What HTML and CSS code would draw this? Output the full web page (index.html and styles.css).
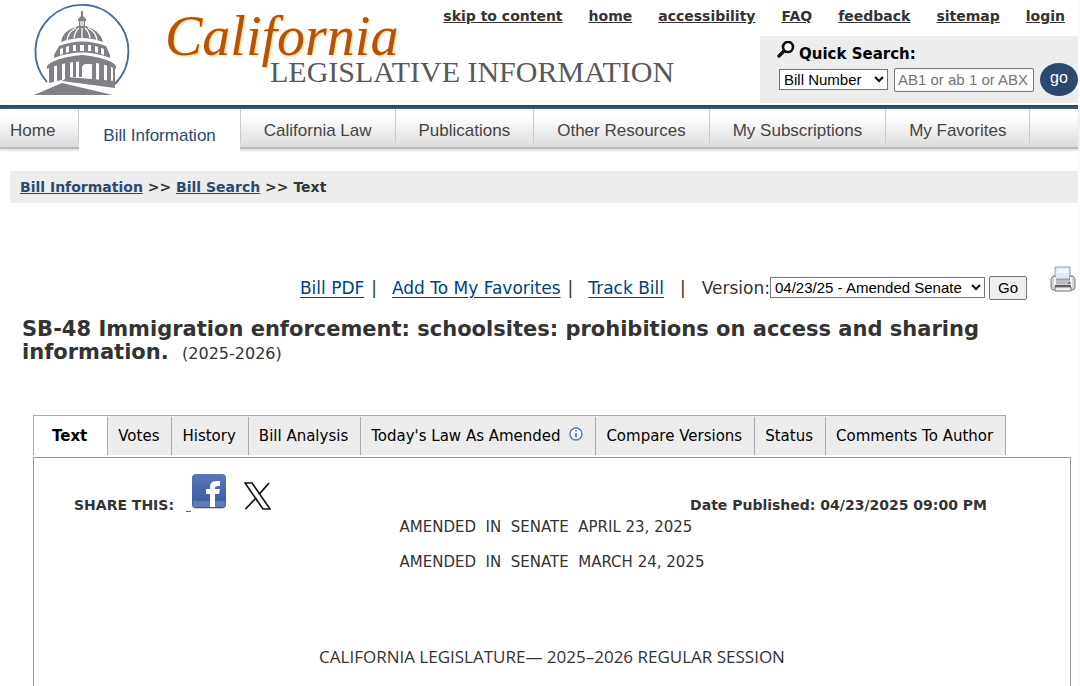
FILE: index.html
```html
<!DOCTYPE html>
<html lang="en">
<head>
    <meta charset="utf-8">
    <title>Bill Text - SB-48</title>
    <link rel="stylesheet" href="styles.css">
</head>
<body>
<div class="page">
    <header class="header">
        <svg class="brand" width="690" height="105" viewBox="0 0 690 105">
            <!-- capitol dome -->
            <path d="M47 82A46.500 46.500 0 1 1 115 84" fill="none" stroke="#4c6d92" stroke-width="1.800"/>
            <g fill="#808186">
                <path d="M81 11h2v5l3 3v2h-1v5h2v2H77v-2h2v-5h-1v-2l3-3z"/>
                <path d="M61 42Q63 30 77 27h10Q100 30 103 42Q82 34 61 42z"/>
                <path d="M59 46Q82 37 106 46L110 55V58Q82 47 54 58V55z"/>
                <path d="M47 66Q53 58 82 55Q110 58 116 66V69Q82 54 47 69z"/>
                <path d="M49 67l5-2v17l-5 1zM57 65l5-2v17l-5 1zM65 63l5-1v16l-5 1zM73 62l3-1v16h-3zM79 61h17v5h-2q-1-2-4-2h-4q-3 0-4 3v10h-3zM92 65h4v15h-4zM99 63l5 1v18h-5zM107 65l4 1v18h-4zM113 67l2 1v17h-2z"/>
                <path d="M68 77l47 4v7L62 81z"/>
                <path d="M34 95l28-12 51 12z"/>
            </g>
            <path d="M67 40q1-8 9-12M74 38q1-7 5-10M82 38V28M90 38q-1-7-5-10M97 40q-1-8-9-12M81 21v5M83 21v5" stroke="#fff" stroke-width="1.300" fill="none"/>
            <path d="M60 49l3-1v6l-3 1zM66 47l3-1v6l-3 1zM73 45h3v6h-3zM80 45h4v6h-4zM88 45h3v6h-3zM95 46l3 1v6l-3-1zM101 48l3 1v6l-3-1z" fill="#fff"/>
            <text class="brand-script" x="165" y="55">California</text>
            <text class="brand-caps" x="270" y="82">LEGISLATIVE INFORMATION</text>
        </svg>
        <nav class="top-links">
            <a href="#content">skip to content</a>
            <a href="#">home</a>
            <a href="#">accessibility</a>
            <a href="#">FAQ</a>
            <a href="#">feedback</a>
            <a href="#">sitemap</a>
            <a href="#">login</a>
        </nav>
        <form class="quick-search">
            <div class="search-title">
                <svg width="18" height="18" viewBox="0 0 18 18">
                    <circle cx="11" cy="6" r="5" fill="#fff" stroke="#111" stroke-width="2.600"/>
                    <path d="M7 10l-5 5" stroke="#111" stroke-width="3.400" stroke-linecap="round"/>
                </svg>
                <label for="billNumber">Quick Search:</label>
            </div>
            <div class="search-fields">
                <select aria-label="Search by">
                    <option>Bill Number</option>
                    <option>Keyword</option>
                </select>
                <input type="text" id="billNumber" placeholder="AB1 or ab 1 or ABX">
                <button type="submit" class="go-round">go</button>
            </div>
        </form>
    </header>

    <nav class="main-nav">
        <a href="#">Home</a>
        <a href="#" class="active">Bill Information</a>
        <a href="#">California Law</a>
        <a href="#">Publications</a>
        <a href="#">Other Resources</a>
        <a href="#">My Subscriptions</a>
        <a href="#">My Favorites</a>
    </nav>

    <div class="breadcrumb">
        <a href="#">Bill Information</a> &gt;&gt; <a href="#">Bill Search</a> &gt;&gt; Text
    </div>

    <main id="content">
        <form class="bill-tools">
            <a href="#">Bill PDF</a>
            <span class="bar">|</span>
            <a href="#">Add To My Favorites</a>
            <span class="bar">|</span>
            <a href="#">Track Bill</a>
            <span class="bar wide">|</span>
            <label for="version">Version:</label>
            <select id="version">
                <option>04/23/25 - Amended Senate</option>
                <option>03/24/25 - Amended Senate</option>
            </select>
            <button type="submit">Go</button>
            <a href="#" class="print" aria-label="Print">
                <svg width="26" height="28" viewBox="0 0 26 28">
                    <path d="M5 1h15v12H5z" fill="#dce8fb" stroke="#9a9fa8"/>
                    <path d="M7 3h11v4H7z" fill="#f5f9ff"/>
                    <path d="M3 10h2v4h15v-4h3l2 3v8q0 3-3 3H4q-3 0-3-3v-8z" fill="#d4d5d8" stroke="#77797d"/>
                    <path d="M6 14h14v4H6z" fill="#b9bbbf"/>
                    <path d="M5 11v10M21 11v10" stroke="#f7f7f7" stroke-width="2"/>
                    <path d="M5 20h16" stroke="#55575b" stroke-width="2"/>
                    <path d="M5 21h16v4H5z" fill="#eee" stroke="#77797d"/>
                    <path d="M18 17h3" stroke="#444"/>
                </svg>
            </a>
        </form>

        <h1 class="bill-title">SB-48 Immigration enforcement: schoolsites: prohibitions on access and sharing information. <span class="session">(2025-2026)</span></h1>

        <nav class="tabs">
            <a href="#" class="active">Text</a>
            <a href="#">Votes</a>
            <a href="#">History</a>
            <a href="#">Bill Analysis</a>
            <a href="#">Today's Law As Amended
                <svg class="info" width="14" height="14" viewBox="0 0 14 14">
                    <circle cx="7" cy="7" r="6" fill="#f7fafd" stroke="#5b7ba6" stroke-width="1.400"/>
                    <path d="M7 6v4.500M7 3v1.600" fill="none" stroke="#5b7ba6" stroke-width="1.800"/>
                </svg>
            </a>
            <a href="#">Compare Versions</a>
            <a href="#">Status</a>
            <a href="#">Comments To Author</a>
        </nav>

        <section class="panel">
            <div class="share-row">
                <span class="share">SHARE THIS:</span>
                <a href="#" class="facebook" aria-label="Facebook">&nbsp;<svg width="36" height="37" viewBox="0 0 36 37">
                        <defs>
                            <linearGradient id="fb" x1="0" y1="0" x2="0" y2="1">
                                <stop offset="0" stop-color="#5a78b5"/>
                                <stop offset="1" stop-color="#36589c"/>
                            </linearGradient>
                        </defs>
                        <rect x="1" y="2" width="34" height="34" rx="4" fill="#c9cfda"/>
                        <rect x="1" y="1" width="34" height="34" rx="4" fill="url(#fb)"/>
                        <path d="M2 28h32v4q0 2-2 2H4q-2 0-2-2z" fill="#5b7bb8"/>
                        <path d="M19 34V21h-4v-5h4v-2q0-6 6-6h4v5h-2q-3 0-3 2v1h5l-1 5h-4v13z" fill="#fff"/>
                    </svg></a>
                <a href="#" aria-label="X">
                    <svg width="27" height="28" viewBox="0 0 27 28">
                        <path d="M1 1h7l18 26h-7z" fill="#fff" stroke="#111" stroke-width="1.600"/>
                        <path d="M25 1L15 12.500M12 16L1.500 27" stroke="#111" stroke-width="1.800"/>
                    </svg>
                </a>
                <span class="published">Date Published: 04/23/2025 09:00 PM</span>
            </div>
            <div class="amended">
                <p>AMENDED&nbsp; IN&nbsp; SENATE&nbsp; APRIL 23, 2025</p>
                <p>AMENDED&nbsp; IN&nbsp; SENATE&nbsp; MARCH 24, 2025</p>
            </div>
            <p class="legislature">CALIFORNIA LEGISLATURE&mdash; 2025&ndash;2026 REGULAR SESSION</p>
        </section>
    </main>
</div>
</body>
</html>
```

FILE: styles.css
```css
html {
    background-color: #fcfcfc;
}
body {
    margin: 0;
    font-family: Verdana, "DejaVu Sans", sans-serif;
    font-size: 15px;
    color: #333;
}
.page {
    display: flex;
    flex-direction: column;
    min-height: 100vh;
    margin-right: 2px;
    background-color: white;
}

/* header */
.header {
    display: grid;
    grid-template-columns: 1fr 318px;
    grid-template-rows: 36px auto;
    border-bottom: 4px solid #2a4a6d;
}
.brand {
    grid-column: 1;
    grid-row: 1 / 3;
}
.brand-script {
    font-family: "Liberation Serif", serif;
    font-size: 56px;
    font-style: italic;
    fill: #b85304;
    filter: drop-shadow(1px 1px 1px #fbcf86);
}
.brand-caps {
    font-family: "Liberation Serif", serif;
    font-size: 30px;
    fill: #58595b;
}
.top-links {
    grid-column: 1 / 3;
    grid-row: 1;
    justify-self: end;
    display: flex;
    gap: 26px;
    padding: 8px 13px 0 0;
    font-size: 14px;
    font-weight: bold;
}
.top-links a {
    color: #333;
}
.quick-search {
    grid-column: 2;
    grid-row: 2;
    align-self: start;
    height: 67px;
    background-color: #ededed;
}
.search-title {
    display: flex;
    gap: 4px;
    padding: 5px 0 0 17px;
    color: #000;
    font-size: 15px;
    font-weight: bold;
}
.search-title label {
    padding-top: 4px;
    line-height: 18px;
}
.search-fields {
    display: flex;
    align-items: center;
    gap: 6px;
    padding-left: 19px;
}
select,
input,
button {
    font-family: "Liberation Sans", Arial, sans-serif;
    font-size: 15px;
    box-sizing: border-box;
}
select {
    height: 21px;
    padding: 0;
    border: 1px solid #767676;
    background-color: white;
    color: #000;
}
.quick-search select {
    width: 109px;
}
.quick-search input {
    flex: 1;
    min-width: 0;
    height: 24px;
    padding: 1px 3px;
    border: 1px solid #767676;
    border-radius: 2px;
}
.go-round {
    width: 38px;
    height: 33px;
    padding: 0 0 3px;
    border: none;
    border-radius: 50%;
    background-color: #2a4a6d;
    color: white;
    font-size: 16px;
}

/* main navigation */
.main-nav {
    display: flex;
    height: 38px;
    border-bottom: 2px solid #bbb;
    background: linear-gradient(#fff 20%, #dcdcdc);
    box-shadow: 0 1px 3px #ccc;
    font-family: "Liberation Sans", Arial, sans-serif;
    font-size: 17px;
}
.main-nav a {
    height: 34px;
    padding: 0 23px;
    border-right: 1px solid #ccc;
    line-height: 43px;
    color: #444;
    text-decoration: none;
}
.main-nav a:first-child {
    padding-left: 10px;
}
.main-nav .active {
    height: 46px;
    padding: 0 24px;
    border-right: none;
    background-color: white;
    line-height: 54px;
    color: #2a4a6d;
}
.main-nav .active + a {
    border-left: 1px solid #ccc;
}

.breadcrumb {
    margin: 22px 0 0 10px;
    padding: 0 10px;
    background-color: #ededed;
    font-size: 14px;
    font-weight: bold;
    line-height: 32px;
}
.breadcrumb a {
    color: #2a4a6d;
}

main {
    flex: 1;
    display: flex;
    flex-direction: column;
}

/* bill tools */
.bill-tools {
    display: flex;
    justify-content: flex-end;
    align-items: center;
    padding: 63px 2px 0 0;
    font-size: 17px;
}
.bill-tools a {
    color: #00417d;
    text-underline-offset: 3px;
}
.bill-tools .bar {
    margin: 0 15px 0 7px;
}
.bill-tools .wide {
    margin: 0 16px;
}
.bill-tools select {
    width: 215px;
}
.bill-tools button {
    height: 24px;
    margin: 0 23px 0 4px;
    padding: 0 8px;
    border: 1px solid #767676;
    border-radius: 2px;
    background-color: #efefef;
    color: #000;
}
.bill-tools .print {
    padding-bottom: 15px;
}
.print svg {
    display: block;
}

.bill-title {
    margin: 9px 80px 0 22px;
    font-size: 21px;
    line-height: 23px;
}
.session {
    margin-left: 6px;
    font-size: 16px;
    font-weight: normal;
}

/* tabs */
.tabs {
    display: flex;
    width: fit-content;
    margin: 50px 0 2px 33px;
    border: 1px solid #aaa;
    border-bottom: none;
    background-color: #ededed;
}
.tabs a {
    margin-top: 1px;
    padding: 0 12px 0 10px;
    border-left: 1px solid #aaa;
    line-height: 38px;
    color: #000;
    text-decoration: none;
    white-space: nowrap;
}
.tabs .active {
    margin: 0;
    padding: 1px 20px 0 18px;
    border-left: none;
    background-color: white;
    font-weight: bold;
}
.info {
    margin-left: 4px;
}

.panel {
    flex: 1;
    margin: 0 7px 0 33px;
    border: 1px solid #999;
    border-bottom: none;
}
.share-row {
    display: flex;
    align-items: baseline;
    padding: 15px 83px 0 40px;
    font-size: 14px;
    font-weight: bold;
    line-height: 18px;
}
.facebook {
    margin: 0 17px 0 12px;
    color: #2a6fb0;
}
.published {
    margin-left: auto;
}
.amended {
    width: fit-content;
    margin: 4px auto 0;
}
.amended p {
    margin: 0 0 17px;
    line-height: 18px;
}
.legislature {
    margin: 74px 0 0;
    font-family: "Open Sans", sans-serif;
    font-size: 17px;
    line-height: 24px;
    text-align: center;
}
```
